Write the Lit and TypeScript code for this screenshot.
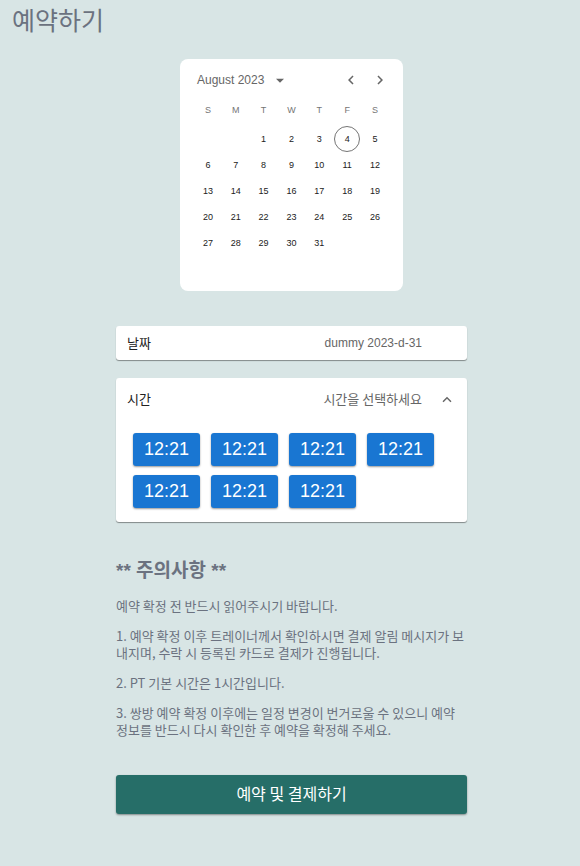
import { LitElement, html, css } from "lit";
import { customElement, state } from "lit/decorators.js";
import { classMap } from "lit/directives/class-map.js";

const WEEKDAYS = [
  ["S", "Sunday"],
  ["M", "Monday"],
  ["T", "Tuesday"],
  ["W", "Wednesday"],
  ["T", "Thursday"],
  ["F", "Friday"],
  ["S", "Saturday"],
];

/** Splits a month into weeks; 0 stands for an empty cell. */
function weeksOf(firstWeekday: number, days: number): number[][] {
  const cells = [
    ...Array(firstWeekday).fill(0),
    ...Array.from({ length: days }, (_, i) => i + 1),
  ];
  while (cells.length % 7) cells.push(0);
  return Array.from({ length: cells.length / 7 }, (_, w) => cells.slice(w * 7, w * 7 + 7));
}

@customElement("month-calendar")
export class MonthCalendar extends LitElement {
  @state() private selected = 4;

  static styles = css`
    :host {
      display: block;
      box-sizing: border-box;
      width: 223px;
      max-width: 100%;
      min-height: 232px;
      padding: 0 14px;
      border-radius: 8px;
      background: #fff;
    }
    button {
      border: 0;
      padding: 0;
      background: none;
      font: inherit;
      color: inherit;
      cursor: pointer;
    }
    .header {
      display: flex;
      align-items: center;
      justify-content: space-between;
      height: 42px;
      padding-left: 3px;
      color: #666;
      font-size: 12px;
    }
    .month {
      display: flex;
      align-items: center;
      gap: 8px;
    }
    .arrows {
      display: flex;
      gap: 11px;
    }
    .arrows button {
      display: flex;
    }
    svg {
      display: block;
      fill: #666;
    }
    table {
      width: 100%;
      table-layout: fixed;
      border-collapse: collapse;
      font-size: 9px;
      text-align: center;
      color: #212121;
    }
    th {
      height: 18px;
      padding: 0 0 7px;
      font-weight: 400;
      color: #757575;
    }
    td {
      height: 26px;
      padding: 0;
    }
    .day {
      box-sizing: border-box;
      width: 26px;
      height: 26px;
      border: 1px solid transparent;
      border-radius: 50%;
      display: block;
      margin: 0 auto;
    }
    .day.selected {
      border-color: #757575;
    }
  `;

  render() {
    return html`
      <div class="header">
        <button class="month">
          August 2023
          <svg width="16" height="16" viewBox="0 0 24 24"><path d="M6 10l6 6 6-6z" /></svg>
        </button>
        <div class="arrows">
          <button aria-label="Previous month">
            <svg width="18" height="18" viewBox="0 0 24 24">
              <path d="M15.410 7.410 14 6l-6 6 6 6 1.410-1.410L10.830 12z" />
            </svg>
          </button>
          <button aria-label="Next month">
            <svg width="18" height="18" viewBox="0 0 24 24">
              <path d="M10 6 8.590 7.410 13.170 12l-4.580 4.590L10 18l6-6z" />
            </svg>
          </button>
        </div>
      </div>
      <table>
        <thead>
          <tr>
            ${WEEKDAYS.map(([s, name]) => html`<th scope="col" abbr=${name}>${s}</th>`)}
          </tr>
        </thead>
        <tbody>
          ${weeksOf(2, 31).map(
            (week) => html`<tr>
              ${week.map(
                (d) => html`<td>
                  ${d
                    ? html`<button
                        class=${classMap({ day: true, selected: d === this.selected })}
                        @click=${() => (this.selected = d)}
                      >${d}</button>`
                    : ""}
                </td>`
              )}
            </tr>`
          )}
        </tbody>
      </table>
    `;
  }
}

@customElement("app-root")
export class AppRoot extends LitElement {
  @state() private open = true;

  private times = Array(7).fill("12:21");

  static styles = css`
    :host {
      display: block;
      box-sizing: border-box;
      min-height: 100vh;
      padding: 0 9px 48px 12px;
      background: #d8e5e5;
      color: #6b7280;
      font-family: "Liberation Sans", "Noto Sans CJK KR", sans-serif;
    }
    h1,
    h2,
    p {
      margin: 0;
    }
    h1 {
      font: 400 25px/38px "Noto Sans CJK KR", sans-serif;
    }
    main {
      display: flex;
      flex-direction: column;
      align-items: center;
    }
    month-calendar {
      margin-top: 21px;
    }
    .column {
      width: 100%;
      max-width: 351px;
      margin-top: 35px;
    }
    .card {
      margin-bottom: 18px;
      border-radius: 3px;
      background: #fff;
      box-shadow: 0 1px 1px rgba(0, 0, 0, 0.4);
    }
    .row {
      display: flex;
      align-items: center;
      box-sizing: border-box;
      width: 100%;
      height: 34px;
      padding: 0 11px;
      border: 0;
      background: none;
      font: 13px "Noto Sans CJK KR", sans-serif;
      color: #212121;
      text-align: left;
    }
    .row.toggle {
      height: 42px;
      cursor: pointer;
    }
    .row span {
      padding-bottom: 2px;
    }
    .row .value {
      margin-left: auto;
      padding-right: 34px;
      color: #666;
    }
    .row .latin {
      padding-bottom: 0;
      font: 12px "Liberation Sans", sans-serif;
    }
    .toggle .value {
      padding-right: 16px;
    }
    .chevron {
      width: 18px;
      height: 18px;
      fill: #666;
    }
    .times {
      display: flex;
      flex-wrap: wrap;
      gap: 9px 11px;
      padding: 13px 17px 14px;
    }
    .time,
    .submit {
      border: 0;
      border-radius: 3px;
      color: #fff;
      cursor: pointer;
      box-shadow: 0 1px 2px rgba(0, 0, 0, 0.4);
    }
    .time {
      width: 67px;
      height: 33px;
      padding: 0;
      background: #1976d2;
      font: 500 18px "Liberation Sans", sans-serif;
    }
    .notes {
      display: flex;
      flex-direction: column;
      gap: 13px;
      margin-top: 36px;
      font: 13px/17px "Noto Sans CJK KR", sans-serif;
    }
    h2 {
      font: 700 19px/26px "Liberation Sans", "Noto Sans CJK KR", sans-serif;
    }
    .submit {
      display: block;
      width: 100%;
      height: 39px;
      margin-top: 37px;
      padding: 0 0 4px;
      background: #266e68;
      font: 16px "Noto Sans CJK KR", sans-serif;
    }
  `;

  render() {
    return html`
      <h1>예약하기</h1>
      <main>
        <month-calendar></month-calendar>
        <div class="column">
          <section class="card">
            <div class="row"><span>날짜</span><span class="value latin">dummy 2023-d-31</span></div>
          </section>
          <section class="card">
            <button
              class="row toggle"
              aria-expanded=${this.open ? "true" : "false"}
              @click=${() => (this.open = !this.open)}
            >
              <span>시간</span><span class="value">시간을 선택하세요</span>
              <svg class="chevron" viewBox="0 0 24 24">
                <path d="M12 9l-6 6 1.410 1.410L12 11.830l4.590 4.580L18 15z" />
              </svg>
            </button>
            ${this.open
              ? html`<div class="times">
                  ${this.times.map((t) => html`<button class="time">${t}</button>`)}
                </div>`
              : ""}
          </section>
          <section class="notes">
            <h2>** 주의사항 **</h2>
            <p>예약 확정 전 반드시 읽어주시기 바랍니다.</p>
            <p>1. 예약 확정 이후 트레이너께서 확인하시면 결제 알림 메시지가 보내지며, 수락 시 등록된 카드로 결제가 진행됩니다.</p>
            <p>2. PT 기본 시간은 1시간입니다.</p>
            <p>3. 쌍방 예약 확정 이후에는 일정 변경이 번거로울 수 있으니 예약 정보를 반드시 다시 확인한 후 예약을 확정해 주세요.</p>
          </section>
          <button class="submit">예약 및 결제하기</button>
        </div>
      </main>
    `;
  }
}
